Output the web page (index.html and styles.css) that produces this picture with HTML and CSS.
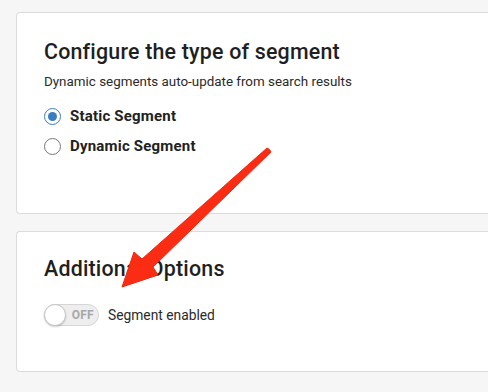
FILE: index.html
```html
<!DOCTYPE html>
<html>
<head>
<meta charset="utf-8">
<link rel="stylesheet" href="styles.css">
</head>
<body>
<div class="page">
  <section class="card card-type">
    <h2 class="title">Configure the type of segment</h2>
    <p class="subtitle">Dynamic segments auto-update from search results</p>
    <div class="radios">
      <label class="radio-row"><span class="radio checked"></span><span class="radio-label">Static Segment</span></label>
      <label class="radio-row"><span class="radio"></span><span class="radio-label">Dynamic Segment</span></label>
    </div>
  </section>
  <section class="card card-options">
    <h2 class="title">Additional Options</h2>
    <div class="toggle-row">
      <span class="toggle"><span class="knob"></span><span class="toggle-text">OFF</span></span>
      <span class="toggle-label">Segment enabled</span>
    </div>
  </section>
  <svg class="arrow" width="488" height="392" viewBox="0 0 488 392">
    <path d="M269.5 149.5 L271 152 L153 267 L158 275 L122 287 L134 252 L142 259 L267 148 Z" fill="#fb2c14" stroke="#f0280f" stroke-width="1" stroke-linejoin="round"/>
  </svg>
</div>
</body>
</html>
```
FILE: styles.css
```css
html, body {
  margin: 0;
  padding: 0;
  background: #f6f6f6;
  overflow: hidden;
}
body {
  width: 488px;
  height: 392px;
  font-family: Roboto, "Liberation Sans", sans-serif;
  color: #222;
}
.page {
  position: relative;
  padding: 12px 0 0 16px;
  display: flex;
  flex-direction: column;
  gap: 17px;
  width: 488px;
  box-sizing: border-box;
}
.card {
  background: #fff;
  border: 1px solid #dcdcdc;
  border-right: none;
  border-radius: 4px 0 0 4px;
  padding: 0 27px;
  box-sizing: border-box;
}
.card-type {
  height: 202px;
  padding-top: 26px;
}
.card-options {
  height: 141px;
  padding-top: 24px;
}
.title {
  margin: 0;
  font-size: 21.4px;
  line-height: 26px;
  font-weight: 500;
  color: #1f1f1f;
  letter-spacing: 0.2px;
}
.subtitle {
  margin: 8px 0 0;
  font-size: 13.4px;
  line-height: 18px;
  color: #2a2a2a;
}
.radios {
  margin-top: 16px;
  display: flex;
  flex-direction: column;
  gap: 12px;
}
.radio-row {
  display: flex;
  align-items: center;
  gap: 9px;
}
.radio {
  width: 17px;
  height: 17px;
  box-sizing: border-box;
  border: 1px solid #777;
  border-radius: 50%;
  display: inline-flex;
  align-items: center;
  justify-content: center;
}
.radio.checked {
  border-color: #3a7cc4;
}
.radio.checked::after {
  content: "";
  width: 9px;
  height: 9px;
  border-radius: 50%;
  background: #3a7cc4;
}
.radio-label {
  font-size: 15px;
  line-height: 18px;
  font-weight: 700;
  color: #222;
  letter-spacing: 0.2px;
}
.toggle-row {
  margin-top: 22px;
  display: flex;
  align-items: center;
  gap: 9px;
}
.toggle {
  position: relative;
  width: 55px;
  height: 22px;
  box-sizing: border-box;
  background: #eeeeee;
  border: 1px solid #d6d6d6;
  border-radius: 11px;
  display: flex;
  align-items: center;
  justify-content: flex-end;
  padding-right: 4px;
}
.knob {
  position: absolute;
  left: -1px;
  top: -1px;
  width: 22px;
  height: 22px;
  box-sizing: border-box;
  border-radius: 50%;
  background: #fff;
  border: 1px solid #c8c8c8;
  box-shadow: 0 1px 2px rgba(0,0,0,0.2);
}
.toggle-text {
  font-size: 12px;
  font-weight: 700;
  color: #a8a8a8;
  letter-spacing: 0.3px;
}
.toggle-label {
  font-size: 13.8px;
  color: #2a2a2a;
}
.arrow {
  position: absolute;
  left: 0;
  top: 0;
  pointer-events: none;
}
```
